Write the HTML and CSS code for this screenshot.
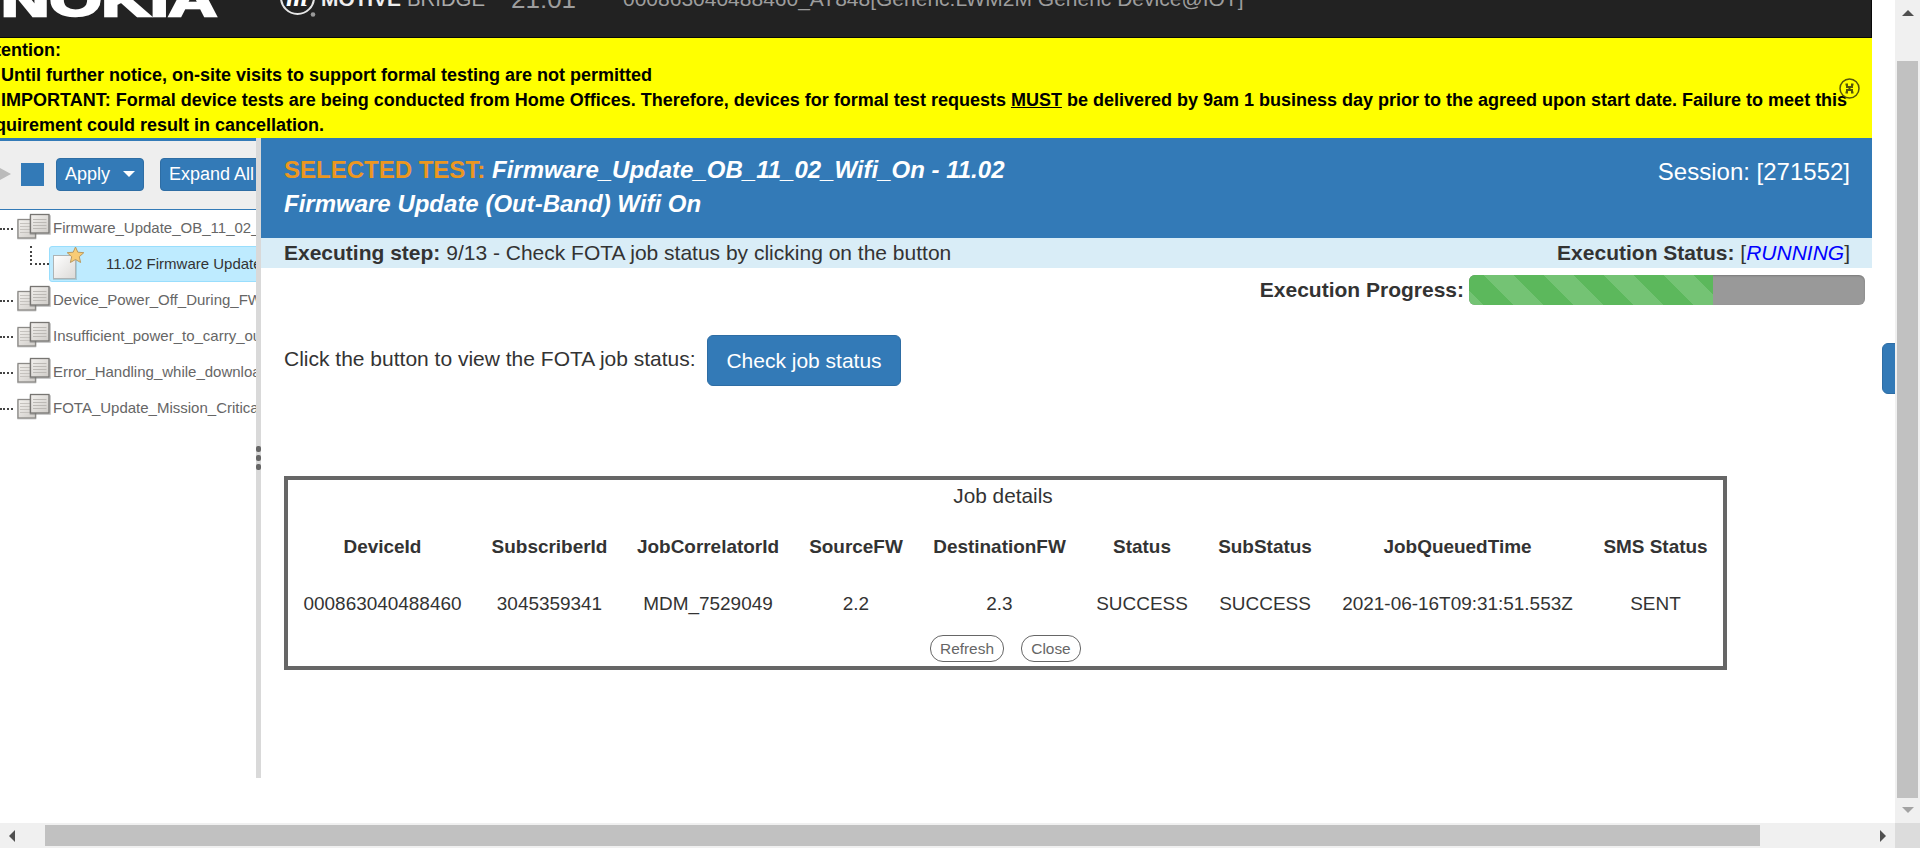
FILE: index.html
```html
<!DOCTYPE html>
<html lang="en">
<head>
<meta charset="utf-8">
<title>Motive Bridge</title>
<link rel="stylesheet" href="styles.css">
</head>
<body>
<svg class="defs" width="0" height="0">
  <defs>
    <linearGradient id="paper" x1="0" y1="0" x2="1" y2="1">
      <stop offset="0" stop-color="#f3f1ee"/><stop offset="1" stop-color="#cfccc8"/>
    </linearGradient>
    <linearGradient id="sheet" x1="0" y1="0" x2="1" y2="1">
      <stop offset="0" stop-color="#fff"/><stop offset="1" stop-color="#dcdad7"/>
    </linearGradient>
    <symbol id="stack" viewBox="0 0 34 28">
      <rect x="0" y="7" width="19.500" height="19.500" rx="1" fill="#777" opacity=".35"/>
      <rect x="1" y="6.500" width="17.500" height="18.500" fill="url(#paper)" stroke="#8c8a87" stroke-width="1.300"/>
      <path d="M3 10.500h12M3 13.500h12M3 16.500h12M3 19.500h12" stroke="#c5c2be" fill="none"/>
      <rect x="12.500" y="2" width="21.500" height="20" rx="1" fill="#777" opacity=".4"/>
      <rect x="13.500" y="1.500" width="18.500" height="18.500" fill="url(#paper)" stroke="#777572" stroke-width="1.300"/>
      <path d="M16 6.500h13.500M16 9.500h13.500M16 12.500h13.500M16 15.500h13.500" stroke="#bcb9b5" fill="none"/>
    </symbol>
  </defs>
</svg>
<div class="window">
  <div class="viewport">
    <header class="navbar">
      <svg class="logos" width="511" height="37" viewBox="0 0 511 37">
        <text class="nokia" x="1" y="15.500" textLength="216" lengthAdjust="spacingAndGlyphs">NOKIA</text>
        <circle cx="297.500" cy="-2.500" r="16.500" fill="none" stroke="#e6e6e6" stroke-width="2"/>
        <text class="script-m" x="286" y="6">m</text>
        <circle cx="313" cy="14.500" r="2.300" fill="#999"/>
        <text class="motive" x="321" y="6" textLength="80" lengthAdjust="spacingAndGlyphs">MOTIVE</text>
        <text class="bridge" x="407" y="6" textLength="78" lengthAdjust="spacingAndGlyphs">BRIDGE</text>
      </svg>
      <span class="clock">21:01</span>
      <span class="device">000863040488460_AT848[Generic:LWM2M Generic Device@IOT]</span>
    </header>
    <section class="notice">
      <p class="cut-a">Attention:</p>
      <p class="cut-b">- Until further notice, on-site visits to support formal testing are not permitted</p>
      <p class="cut-b">- IMPORTANT: Formal device tests are being conducted from Home Offices. Therefore, devices for formal test requests <u>MUST</u> be delivered by 9am 1 business day prior to the agreed upon start date. Failure to meet this</p>
      <p class="cut-c">requirement could result in cancellation.</p>
      <svg class="dismiss" width="21" height="21" viewBox="0 0 21 21"><circle cx="10.500" cy="10.500" r="9.500"/><path class="cross" d="M6.500 6.500h1.500v2.500h5v-2.500h1.500M6.500 14.500h1.500v-2.500h5v2.500h1.500M10.500 9v3"/></svg>
    </section>
    <div class="columns">
      <aside class="sidebar">
        <div class="toolbar">
          <span class="play"></span><span class="stop"></span>
          <button class="btn apply">Apply <i class="caret"></i></button>
          <button class="btn expand">Expand All</button>
        </div>
        <ul class="tree">
          <li><i class="dots"></i><svg width="34" height="28"><use href="#stack"/></svg><span>Firmware_Update_OB_11_02_Wifi_On</span></li>
          <li class="child"><i class="elbow"></i><div class="selected"><svg width="36" height="36" viewBox="0 0 36 36"><rect x="4" y="9" width="24" height="25" fill="#688" opacity=".3"/><rect x="4.500" y="9.500" width="22" height="23" fill="url(#sheet)" stroke="#aeb4b5"/><path d="M26.500 1l2.300 5.200 6 .5-4.500 4 1.300 5.800-5.100-3-5.100 3 1.300-5.800-4.500-4 6-.5z" fill="#f8cc75" stroke="#b99a62"/></svg><span>11.02 Firmware Update (Out-Band)</span></div></li>
          <li><i class="dots"></i><svg width="34" height="28"><use href="#stack"/></svg><span>Device_Power_Off_During_FW</span></li>
          <li><i class="dots"></i><svg width="34" height="28"><use href="#stack"/></svg><span>Insufficient_power_to_carry_out</span></li>
          <li><i class="dots"></i><svg width="34" height="28"><use href="#stack"/></svg><span>Error_Handling_while_download</span></li>
          <li><i class="dots"></i><svg width="34" height="28"><use href="#stack"/></svg><span>FOTA_Update_Mission_Critical</span></li>
        </ul>
      </aside>
      <div class="splitter"><i></i><i></i><i></i></div>
      <main>
        <div class="heading">
          <h1><span>SELECTED TEST:</span> <em>Firmware_Update_OB_11_02_Wifi_On - 11.02<br>Firmware Update (Out-Band) Wifi On</em></h1>
          <div class="session">Session: [271552]</div>
        </div>
        <div class="status">
          <div><b>Executing step:</b> 9/13 - Check FOTA job status by clicking on the button</div>
          <div><b>Execution Status:</b> [<em>RUNNING</em>]</div>
        </div>
        <div class="progress-row"><b>Execution Progress:</b><div class="progress"><div class="bar"></div></div></div>
        <div class="action">
          <span>Click the button to view the FOTA job status:</span>
          <button class="check">Check job status</button>
          <span class="side-tab"></span>
        </div>
        <section class="job">
          <div class="caption">Job details</div>
          <table>
            <colgroup><col class="c1"><col class="c2"><col class="c3"><col class="c4"><col class="c5"><col class="c6"><col class="c7"><col class="c8"><col class="c9"></colgroup>
            <tr><th>DeviceId</th><th>SubscriberId</th><th>JobCorrelatorId</th><th>SourceFW</th><th>DestinationFW</th><th>Status</th><th>SubStatus</th><th>JobQueuedTime</th><th>SMS Status</th></tr>
            <tr><td>000863040488460</td><td>3045359341</td><td>MDM_7529049</td><td>2.2</td><td>2.3</td><td>SUCCESS</td><td>SUCCESS</td><td>2021-06-16T09:31:51.553Z</td><td>SENT</td></tr>
          </table>
          <div class="buttons"><button class="refresh">Refresh</button><button class="close">Close</button></div>
        </section>
      </main>
    </div>
  </div>
  <div class="vscroll"><i class="up"></i><div class="vthumb"></div><i class="down"></i></div>
  <div class="hscroll"><i class="left"></i><div class="hthumb"></div><i class="right"></i></div>
  <div class="corner"></div>
</div>
</body>
</html>
```
FILE: styles.css
```css
* { box-sizing: border-box; }
body { margin: 0; overflow: hidden; background: #fff; color: #333; font: 21px/30px "Liberation Sans", Arial, sans-serif; }
button { font-family: inherit; white-space: nowrap; }
p, h1, ul { margin: 0; padding: 0; }
.defs { position: absolute; }
.window { display: grid; grid-template: 823px 25px / 1895px 25px; width: 1920px; height: 848px; }
.viewport { overflow: hidden; }

.navbar { display: flex; width: 1872px; height: 38px; background: #222; border: solid #080808; border-width: 0 1px 1px 0; overflow: hidden; color: #9d9d9d; white-space: nowrap; }
.logos { flex: none; width: 511px; }
.nokia { font: bold 46px "Liberation Sans", Arial, sans-serif; fill: #fff; stroke: #fff; stroke-width: 2.5px; }
.script-m { font: italic bold 28px "Liberation Serif", serif; fill: #fff; }
.motive { font: bold 20px "Liberation Sans", Arial, sans-serif; fill: #eee; }
.bridge { font: 20px "Liberation Sans", Arial, sans-serif; fill: #aaa; }
.clock { font-size: 26px; margin-top: -16px; width: 112px; }
.device { margin-top: -16px; }

.notice { position: relative; width: 1872px; height: 100px; background: #ff0; color: #000; font: bold 18px/25px "Liberation Sans", Arial, sans-serif; white-space: nowrap; }
.cut-a { margin-left: -24px; }
.cut-b { margin-left: -10px; }
.cut-c { margin-left: -22px; }
.dismiss { position: absolute; left: 1839px; top: 40px; fill: none; stroke: #55550a; stroke-width: 1.5; }
.cross { stroke-width: 2; }

.columns { display: flex; height: 640px; width: 1895px; }
.sidebar { width: 256px; overflow: hidden; border-top: 3px solid #337ab7; flex: none; }
.toolbar { display: flex; align-items: center; height: 69px; padding-bottom: 2px; background: #eee; border-bottom: 1px solid #337ab7; }
.play { border: solid transparent; border-width: 6px 0 6px 11px; border-left-color: #bbb; flex: none; }
.stop { width: 23px; height: 23px; margin-left: 10px; background: #337ab7; flex: none; }
.btn { height: 33px; flex: none; border: 1px solid #2e6da4; border-radius: 4px; background: #337ab7; color: #fff; font-size: 18px; padding: 0 8px; }
.apply { width: 88px; margin-left: 12px; display: flex; align-items: center; justify-content: space-between; }
.expand { margin-left: 16px; width: 104px; text-align: left; padding-left: 8px; }
.caret { border: solid transparent; border-width: 6px 6px 0; border-top-color: #fff; }
.tree { list-style: none; font-size: 15px; line-height: 36px; color: #666; }
.tree li { display: flex; height: 36px; white-space: nowrap; }
.tree svg { flex: none; }
.tree li > svg { margin: 3px 2px 0 4px; }
.dots { width: 13px; border-top: 2px dotted #444; margin-top: 18px; flex: none; }
.elbow { width: 19px; height: 19px; margin-left: 30px; border: dotted #444; border-width: 0 0 2px 2px; flex: none; }
.selected { display: flex; width: 260px; flex: none; background: #beebff; border: 1px solid #99defd; border-radius: 3px; color: #333; line-height: 34px; }
.selected svg { margin: -1px 21px 0 -1px; }
.splitter { width: 5px; background: #d9d9d9; flex: none; padding-top: 308px; display: flex; flex-direction: column; gap: 3px; }
.splitter i { height: 6px; width: 5px; border-radius: 2px; background: #666; flex: none; }

main { width: 1634px; flex: none; }
.heading, .status { display: flex; justify-content: space-between; width: 1611px; padding: 0 22px 0 23px; }
.heading { height: 100px; background: #337ab7; color: #fff; padding-top: 15px; }
h1 { font-size: 24px; line-height: 34px; }
h1 span { color: #ec971f; }
.session { font-size: 24px; line-height: 38px; }
.status { background: #d9edf7; height: 30px; }
.status em { color: #00f; }
.progress-row { display: flex; justify-content: flex-end; width: 1604px; padding-top: 7px; height: 67px; gap: 5px; }
.progress { width: 396px; height: 30px; background: #999; border-radius: 6px; overflow: hidden; box-shadow: inset 0 1px 2px #0003; }
.bar { width: 244px; height: 30px; background: #5cb85c linear-gradient(45deg, #ffffff26 25%, transparent 25%, transparent 50%, #ffffff26 50%, #ffffff26 75%, transparent 75%) 15px 0 / 60px 60px; }
.action { display: flex; padding-left: 23px; height: 141px; line-height: 48px; white-space: nowrap; }
.action > span:first-child { width: 423px; flex: none; }
.check { width: 194px; height: 51px; background: #337ab7; border: 1px solid #2e6da4; border-radius: 6px; color: #fff; font-size: 21px; padding: 0; }
.side-tab { width: 20px; height: 51px; margin: 8px -7px 0 auto; background: #337ab7; border: 1px solid #2e6da4; border-radius: 6px; flex: none; }
.job { width: 1443px; height: 194px; margin-left: 23px; border: 4px solid #666; text-align: center; }
.caption { height: 32px; padding-right: 5px; font-size: 20.8px; line-height: 32px; }
table { width: 1435px; table-layout: fixed; border-collapse: collapse; font-size: 18.95px; line-height: 27px; white-space: nowrap; }
th, td { padding: 0; }
th { height: 68px; }
td { height: 46px; }
.c1 { width: 189px; } .c2 { width: 145px; } .c3 { width: 172px; } .c4 { width: 124px; } .c5 { width: 163px; } .c6 { width: 122px; } .c7 { width: 124px; } .c8 { width: 261px; } .c9 { width: 135px; }
.buttons { display: flex; justify-content: center; gap: 17px; padding-top: 9px; }
.buttons button { height: 27px; border: 1px solid #666; border-radius: 13px; background: #fff; color: #666; font-size: 15.4px; padding: 0; }
.refresh { width: 74px; }
.close { width: 60px; }

.vscroll { background: #f0f0f0; display: flex; flex-direction: column; align-items: center; }
.vthumb { width: 21px; height: 737px; background: #c1c1c1; }
.vscroll i { border: solid transparent; border-width: 0 6px 6px; }
.vscroll .up { border-bottom-color: #505050; margin: 10px 0 45px; }
.vscroll .down { border-width: 6px 6px 0; border-top-color: #a3a3a3; margin-top: 9px; }
.hscroll { background: #f0f0f0; display: flex; align-items: center; }
.hthumb { height: 21px; width: 1715px; background: #c1c1c1; }
.hscroll i { border: solid transparent; border-width: 6px 0; }
.hscroll .left { border-right: 6px solid #505050; margin: 0 30px 0 9px; }
.hscroll .right { border-left: 6px solid #505050; margin-left: 120px; }
.corner { background: #dcdcdc; }
```
